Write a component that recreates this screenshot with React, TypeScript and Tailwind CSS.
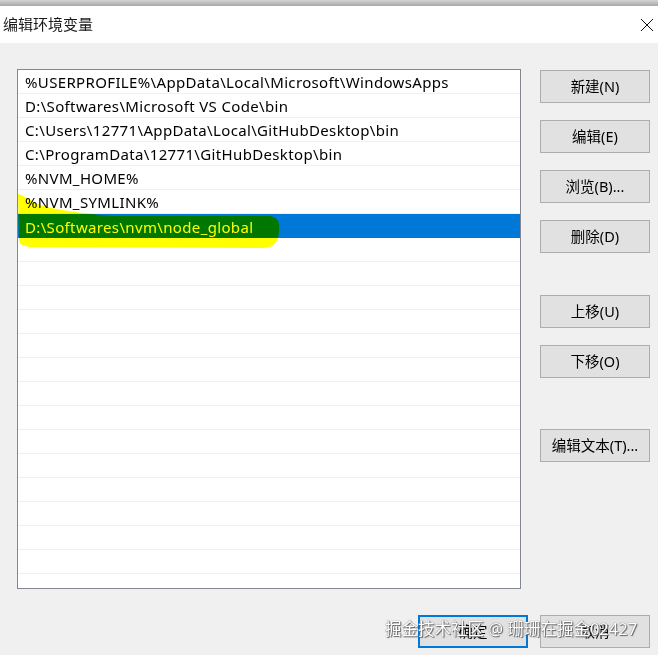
import React from "react";

const rows = [
  "%USERPROFILE%\\AppData\\Local\\Microsoft\\WindowsApps",
  "D:\\Softwares\\Microsoft VS Code\\bin",
  "C:\\Users\\12771\\AppData\\Local\\GitHubDesktop\\bin",
  "C:\\ProgramData\\12771\\GitHubDesktop\\bin",
  "%NVM_HOME%",
  "%NVM_SYMLINK%",
  "D:\\Softwares\\nvm\\node_global",
];

const font = { fontFamily: '"Noto Sans", "Noto Sans CJK SC", sans-serif' };

function Btn({ label, primary = false }: { label: string; primary?: boolean }) {
  return (
    <div
      className={
        "w-[110px] h-[33px] flex items-center justify-center text-[14.5px] text-black bg-[#e1e1e1] " +
        (primary ? "border-2 border-[#0078d7]" : "border border-[#adadad]")
      }
    >
      {label}
    </div>
  );
}

export default function App() {
  const total = 22;
  return (
    <div className="w-[658px] h-[655px] flex flex-col bg-[#f0f0f0] overflow-hidden" style={font}>
      <div className="h-[6px] bg-gradient-to-b from-[#d4d4d4] to-[#a8a8a8]" />
      <div className="h-[37px] bg-white flex items-center justify-between pl-[3px] pr-[4px]">
        <span className="text-[15px] text-[#1a1a1a] leading-none">编辑环境变量</span>
        <svg width="14" height="14" viewBox="0 0 14 14" className="mt-[1px]">
          <path d="M1 1 L13 13 M13 1 L1 13" stroke="#111" strokeWidth="1" />
        </svg>
      </div>
      <div className="flex-1 flex flex-col pt-[26px] pl-[17px] pr-[8px]">
        <div className="flex">
          <div className="relative w-[504px] h-[520px] border border-[#828790] bg-white overflow-hidden">
            {Array.from({ length: total }).map((_, i) => {
              const text = rows[i] ?? "";
              const sel = i === 6;
              return (
                <div
                  key={i}
                  className={
                    "h-[24px] flex items-center pl-[7px] pt-[2px] text-[15px] tracking-[0.35px] leading-none whitespace-nowrap " +
                    (sel ? "bg-[#0078d7] text-white" : "border-b border-[#f0f0f0] text-black")
                  }
                >
                  {text}
                </div>
              );
            })}
            <svg
              className="absolute left-0 top-0 mix-blend-multiply pointer-events-none"
              width="502"
              height="518"
              viewBox="0 0 502 518"
            >
              <path
                d="M0 124 C 6 126, 12 130, 22 135 C 42 141, 72 144, 94 146 L 252 146 C 260 147, 262 152, 261 162 C 260 174, 254 178, 244 178 L 12 177 C 4 176, 2 174, 1 170 Z"
                fill="#ffff00"
              />
            </svg>
          </div>
          <div className="flex flex-col ml-[19px] pt-[1px]">
            <Btn label="新建(N)" />
            <div className="h-[17px]" />
            <Btn label="编辑(E)" />
            <div className="h-[17px]" />
            <Btn label="浏览(B)..." />
            <div className="h-[17px]" />
            <Btn label="删除(D)" />
            <div className="h-[42px]" />
            <Btn label="上移(U)" />
            <div className="h-[17px]" />
            <Btn label="下移(O)" />
            <div className="h-[51px]" />
            <Btn label="编辑文本(T)..." />
          </div>
        </div>
        <div className="relative flex justify-end gap-[12px] mt-[26px]">
          <Btn label="确定" primary />
          <Btn label="取消" />
          <div className="absolute left-[368px] top-[6px] text-[16.5px] text-white leading-none whitespace-nowrap [text-shadow:0_0_1px_#444,1px_1px_1px_#666]">
            掘金技术社区 @ 珊珊在掘金02427
          </div>
        </div>
      </div>
    </div>
  );
}
